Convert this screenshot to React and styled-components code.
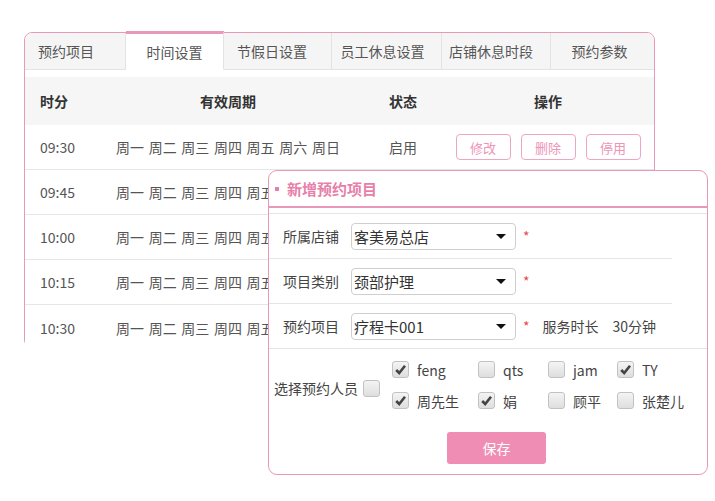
import React from "react";
import styled, { createGlobalStyle } from "styled-components";

const GlobalStyle = createGlobalStyle`
  body {
    margin: 0;
    background: #fff;
    font-family: "Noto Sans CJK SC", "Noto Sans", sans-serif;
    color: #555;
  }
`;

const PINK = "#e899b9";

const Stage = styled.div`
  position: relative;
  width: 715px;
  height: 501px;
  padding: 32px 0 0 24px;
  box-sizing: border-box;
`;

const Panel = styled.div`
  width: 631px;
  height: 316px;
  box-sizing: border-box;
  border: 1px solid ${PINK};
  border-radius: 8px;
  background: #fff;
`;

const Tabs = styled.div`
  display: flex;
  height: 37px;
`;

const Tab = styled.div`
  width: ${(p) => p.$w}px;
  display: flex;
  align-items: center;
  justify-content: center;
  padding-right: ${(p) => p.$shift}px;
  font-size: 14px;
  color: #555;
  box-sizing: border-box;
  background: ${(p) => (p.$active ? "#fff" : "#f5f5f5")};
  border-right: 1px solid #e3e3e3;
  border-bottom: 1px solid ${(p) => (p.$active ? "#fff" : "#e3e3e3")};
  border-top: ${(p) => (p.$active ? `3px solid ${PINK}` : "none")};
  margin-top: ${(p) => (p.$active ? "-2px" : "0")};
  &:first-child {
    border-top-left-radius: 7px;
  }
  &:last-child {
    border-right: none;
    border-top-right-radius: 7px;
  }
`;

const Table = styled.div`
  margin-top: 7px;
`;

const Row = styled.div`
  display: grid;
  grid-template-columns: 75px 256px 94px 196px 1fr;
  align-items: center;
  height: ${(p) => (p.$head ? 48 : 45)}px;
  box-sizing: border-box;
  background: ${(p) => (p.$head ? "#f6f6f6" : "#fff")};
  border-bottom: ${(p) => (p.$head || p.$last ? "none" : "1px solid #e6e6e6")};
  font-size: 14px;
  font-weight: ${(p) => (p.$head ? 700 : 400)};
  color: ${(p) => (p.$head ? "#333" : "#555")};
`;

const Cell = styled.div`
  padding-left: ${(p) => (p.$left ? "15px" : "0")};
  white-space: nowrap;
  display: flex;
  justify-content: ${(p) => (p.$left ? "flex-start" : "center")};
  gap: 10px;
  word-spacing: 1.5px;
`;

const OpButton = styled.div`
  width: 55px;
  height: 26px;
  box-sizing: border-box;
  border: 1px solid #eda7c3;
  border-radius: 4px;
  color: #ee94b8;
  font-size: 13px;
  display: flex;
  align-items: center;
  justify-content: center;
  font-weight: 400;
`;

const Dialog = styled.div`
  position: absolute;
  left: 268px;
  top: 170px;
  width: 440px;
  height: 305px;
  box-sizing: border-box;
  border: 1px solid ${PINK};
  border-radius: 9px;
  background: #fff;
`;

const DialogHead = styled.div`
  height: 35px;
  display: flex;
  align-items: center;
  gap: 8px;
  padding-left: 6px;
  border-bottom: 2px solid ${PINK};
  color: #e77fa9;
  font-size: 15px;
  font-weight: 700;
  &::before {
    content: "";
    width: 4px;
    height: 4px;
    background: #e77fa9;
  }
`;

const Form = styled.div`
  margin-top: 5px;
  border-top: 1px solid #e5e5e5;
`;

const FormRow = styled.div`
  display: flex;
  align-items: center;
  height: 45px;
  box-sizing: border-box;
  width: ${(p) => (p.$full ? "100%" : "403px")};
  padding-left: 14px;
  border-bottom: 1px solid #e5e5e5;
  font-size: 14px;
  color: #444;
`;

const Label = styled.div`
  width: 68px;
  flex: none;
`;

const Select = styled.div`
  width: 165px;
  height: 27px;
  box-sizing: border-box;
  border: 1px solid #cfcfcf;
  border-radius: 4px;
  display: flex;
  align-items: center;
  justify-content: space-between;
  padding: 0 9px 0 2px;
  font-size: 15px;
  color: #333;
  &::after {
    content: "";
    border-left: 5.5px solid transparent;
    border-right: 5.5px solid transparent;
    border-top: 5px solid #111;
  }
`;

const Star = styled.span`
  color: #e84a4a;
  margin-left: 7px;
  font-size: 14px;
`;

const Extra = styled.span`
  margin-left: ${(p) => p.$gap}px;
  color: #444;
`;

const People = styled.div`
  display: flex;
  align-items: center;
  padding: 12px 0 0 5px;
  font-size: 14px;
  color: #444;
`;

const PeopleLabel = styled.div`
  display: flex;
  align-items: center;
  gap: 5px;
  margin-top: 6px;
`;

const PeopleGrid = styled.div`
  margin-left: 12px;
  display: grid;
  grid-template-columns: 86px 70px 69px auto;
  row-gap: 14px;
`;

const Person = styled.div`
  display: flex;
  align-items: center;
  gap: 8px;
  height: 17px;
  white-space: nowrap;
`;

const Box = styled.div`
  width: 17px;
  height: 17px;
  box-sizing: border-box;
  border: 1px solid #c2c2c2;
  border-radius: 3px;
  background: linear-gradient(#f4f4f4, #dedede);
  display: flex;
  align-items: center;
  justify-content: center;
  flex: none;
`;

const Footer = styled.div`
  padding: 23px 0 0 178px;
`;

const SaveButton = styled.div`
  width: 99px;
  height: 32px;
  border-radius: 3px;
  background: #f08db5;
  color: #fff;
  font-size: 14px;
  display: flex;
  align-items: center;
  justify-content: center;
`;

const Check = ({ on }) => (
  <Box>
    {on && (
      <svg width="13" height="13" viewBox="0 0 13 13">
        <path d="M2.2 7 L5.2 10 L11 2.8" fill="none" stroke="#444" strokeWidth="2.6" />
      </svg>
    )}
  </Box>
);

const tabs = [
  ["预约项目", 101, 18],
  ["时间设置", 98, 0],
  ["节假日设置", 108, 11],
  ["员工休息设置", 110, 8],
  ["店铺休息时段", 109, 10],
  ["预约参数", 103, 6],
];

const times = ["09:30", "09:45", "10:00", "10:15", "10:30"];
const week = "周一 周二 周三 周四 周五 周六 周日";

const people = [
  ["feng", true],
  ["qts", false],
  ["jam", false],
  ["TY", true],
  ["周先生", true],
  ["娟", true],
  ["顾平", false],
  ["张楚儿", false],
];

export default function App() {
  return (
    <>
      <GlobalStyle />
      <Stage>
        <Panel>
          <Tabs>
            {tabs.map(([t, w, s], i) => (
              <Tab key={t} $w={w} $shift={s} $active={i === 1}>
                {t}
              </Tab>
            ))}
          </Tabs>
          <Table>
            <Row $head>
              <Cell $left>时分</Cell>
              <Cell>有效周期</Cell>
              <Cell>状态</Cell>
              <Cell>操作</Cell>
            </Row>
            {times.map((t, i) => (
              <Row key={t} $last={i === times.length - 1}>
                <Cell $left>{t}</Cell>
                <Cell>{week}</Cell>
                <Cell>{i === 0 ? "启用" : ""}</Cell>
                <Cell>
                  {i === 0 && (
                    <>
                      <OpButton>修改</OpButton>
                      <OpButton>删除</OpButton>
                      <OpButton>停用</OpButton>
                    </>
                  )}
                </Cell>
              </Row>
            ))}
          </Table>
        </Panel>

        <Dialog>
          <DialogHead>新增预约项目</DialogHead>
          <Form>
            <FormRow>
              <Label>所属店铺</Label>
              <Select>客美易总店</Select>
              <Star>*</Star>
            </FormRow>
            <FormRow>
              <Label>项目类别</Label>
              <Select>颈部护理</Select>
              <Star>*</Star>
            </FormRow>
            <FormRow $full>
              <Label>预约项目</Label>
              <Select>疗程卡001</Select>
              <Star>*</Star>
              <Extra $gap={13}>服务时长</Extra>
              <Extra $gap={14}>30分钟</Extra>
            </FormRow>
          </Form>
          <People>
            <PeopleLabel>
              选择预约人员
              <Check />
            </PeopleLabel>
            <PeopleGrid>
              {people.map(([n, on]) => (
                <Person key={n}>
                  <Check on={on} />
                  {n}
                </Person>
              ))}
            </PeopleGrid>
          </People>
          <Footer>
            <SaveButton>保存</SaveButton>
          </Footer>
        </Dialog>
      </Stage>
    </>
  );
}
